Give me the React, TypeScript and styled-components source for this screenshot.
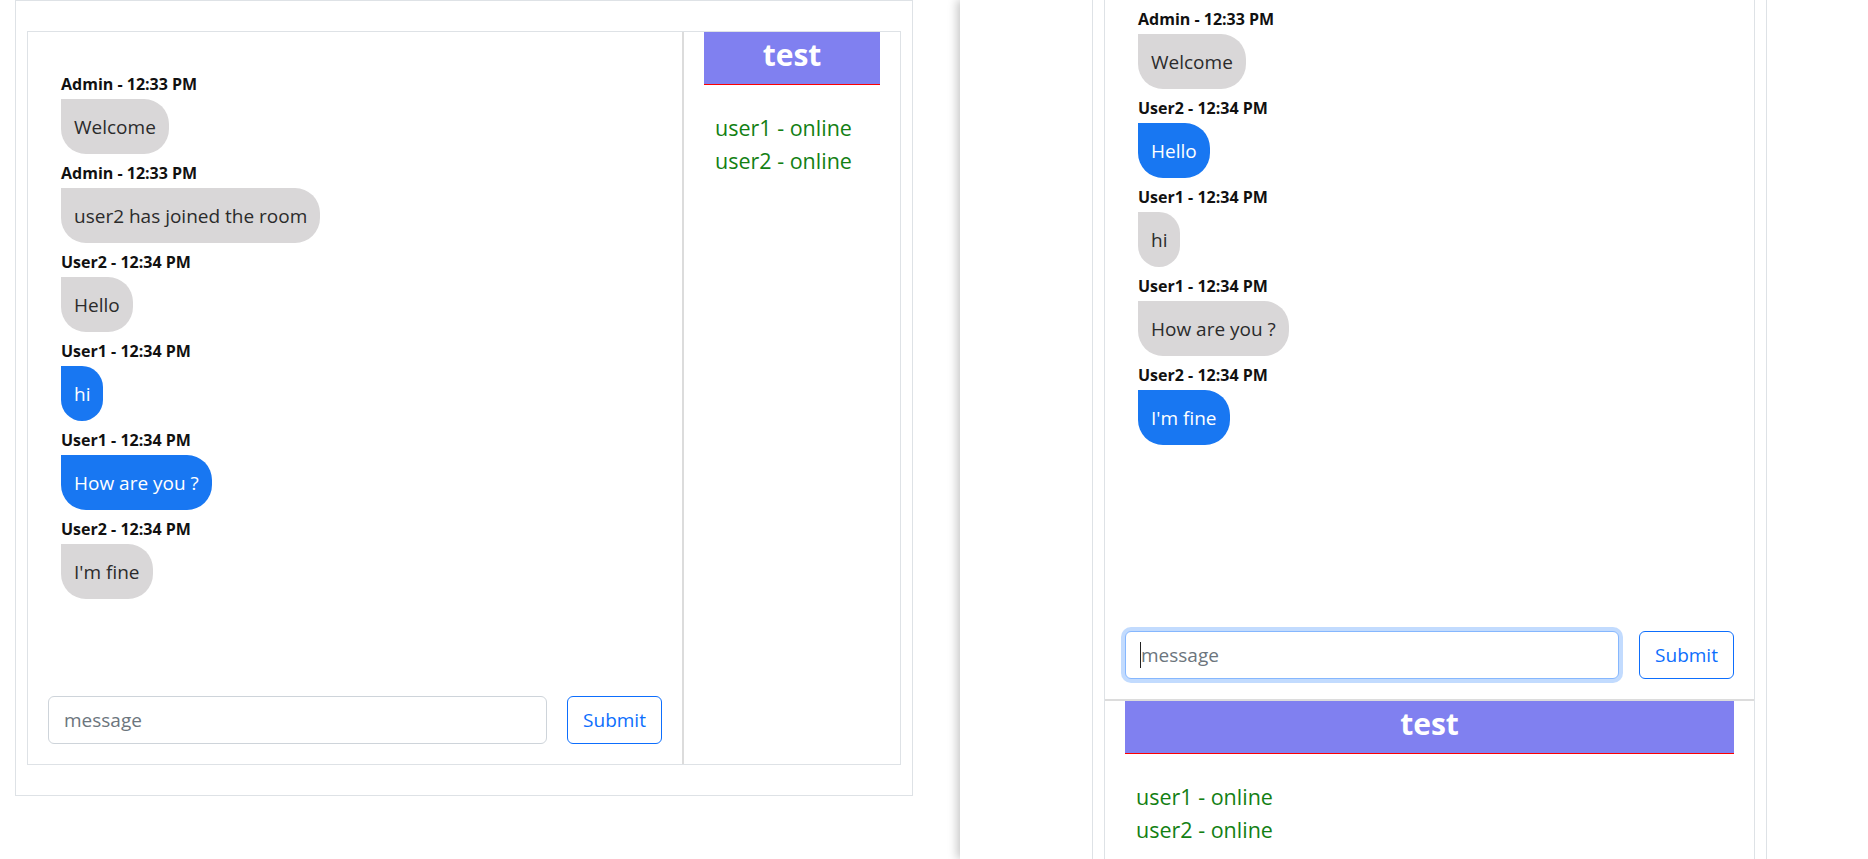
import React from "react";
import styled, { createGlobalStyle, css } from "styled-components";

type Message = { author: string; time: string; text: string; mine: boolean };

const user1Messages: Message[] = [
  { author: "Admin", time: "12:33 PM", text: "Welcome", mine: false },
  { author: "Admin", time: "12:33 PM", text: "user2 has joined the room", mine: false },
  { author: "User2", time: "12:34 PM", text: "Hello", mine: false },
  { author: "User1", time: "12:34 PM", text: "hi", mine: true },
  { author: "User1", time: "12:34 PM", text: "How are you ?", mine: true },
  { author: "User2", time: "12:34 PM", text: "I'm fine", mine: false },
];

const user2Messages: Message[] = [
  { author: "Admin", time: "12:33 PM", text: "Welcome", mine: false },
  { author: "User2", time: "12:34 PM", text: "Hello", mine: true },
  { author: "User1", time: "12:34 PM", text: "hi", mine: false },
  { author: "User1", time: "12:34 PM", text: "How are you ?", mine: false },
  { author: "User2", time: "12:34 PM", text: "I'm fine", mine: true },
];

const users = ["user1", "user2"];

const GlobalStyle = createGlobalStyle`
  html, body {
    margin: 0;
    padding: 0;
    background: #fff;
  }
  body {
    font-family: "Open Sans", "Noto Sans", sans-serif;
    color: #212529;
  }
  * {
    box-sizing: border-box;
  }
`;

const Screen = styled.div`
  display: flex;
  width: 1868px;
  height: 859px;
  overflow: hidden;
  background: #fff;
`;

const DesktopWindow = styled.div`
  flex: 0 0 960px;
  padding-left: 15px;
  background: #fff;
`;

const MobileWindow = styled.div`
  flex: 1;
  position: relative;
  z-index: 1;
  padding-left: 132px;
  background: #fff;
  overflow: hidden;
  box-shadow: -3px 0 9px rgba(0, 0, 0, 0.22);
`;

const Container = styled.div<{ $width: number; $shift: number }>`
  width: ${(p) => p.$width}px;
  margin-top: ${(p) => p.$shift}px;
  padding: 30px 11px;
  border: 1px solid #dee2e6;
`;

const Room = styled.div<{ $stacked: boolean }>`
  display: flex;
  flex-direction: ${(p) => (p.$stacked ? "column" : "row")};
  border: 1px solid #dee2e6;
`;

const ChatColumn = styled.div<{ $stacked: boolean }>`
  display: flex;
  flex-direction: column;
  ${(p) =>
    p.$stacked
      ? css`
          border-bottom: 2px solid #dcdcdc;
        `
      : css`
          flex: 0 0 656px;
          border-right: 2px solid #dcdcdc;
        `}
`;

const MessageList = styled.div`
  height: 664px;
  padding: 43px 20px 0 33px;
  overflow: hidden;
`;

const MessageItem = styled.div`
  display: flex;
  flex-direction: column;
  align-items: flex-start;
  margin-bottom: 10px;
`;

const Meta = styled.span`
  font-size: 16px;
  line-height: 18px;
  font-weight: 700;
  color: #111;
`;

const Bubble = styled.div<{ $mine: boolean }>`
  margin-top: 6px;
  padding: 12.5px 13px;
  font-size: 19px;
  line-height: 30px;
  border-radius: 0 25px 25px 25px;
  background: ${(p) => (p.$mine ? "#1877f2" : "#d9d7d8")};
  color: ${(p) => (p.$mine ? "#fff" : "#2b2b2b")};
`;

const Form = styled.form`
  display: flex;
  gap: 20px;
  padding: 0 20px 20px 20px;
`;

const InputWrap = styled.div`
  position: relative;
  flex: 1;
`;

const MessageInput = styled.input<{ $focused: boolean }>`
  display: block;
  width: 100%;
  height: 48px;
  padding: 0 15px;
  font-family: inherit;
  font-size: 19px;
  color: #212529;
  border: 1px solid ${(p) => (p.$focused ? "#86b7fe" : "#ced4da")};
  border-radius: 6px;
  outline: none;
  box-shadow: ${(p) => (p.$focused ? "0 0 0 4px rgba(13, 110, 253, 0.25)" : "none")};

  &::placeholder {
    color: #6c757d;
  }
`;

const Caret = styled.span`
  position: absolute;
  left: 15px;
  top: 11px;
  width: 1px;
  height: 26px;
  background: #222;
`;

const SubmitButton = styled.button`
  flex: 0 0 95px;
  height: 48px;
  padding: 0;
  font-family: inherit;
  font-size: 19px;
  color: #0d6efd;
  background: #fff;
  border: 1px solid #0d6efd;
  border-radius: 6px;
`;

const Sidebar = styled.div`
  flex: 1;
  display: flex;
  flex-direction: column;
`;

const RoomTitle = styled.h2`
  margin: 0 20px;
  height: 53px;
  padding-bottom: 7px;
  display: flex;
  align-items: center;
  justify-content: center;
  font-size: 30px;
  font-weight: 700;
  color: #fff;
  background: #8080f0;
  border-bottom: 1px solid red;
`;

const UserList = styled.ul`
  list-style: none;
  margin: 0 20px;
  padding: 26px 11px 20px;
`;

const UserItem = styled.li`
  font-size: 21.5px;
  line-height: 33px;
  color: #138013;
`;

const ChatRoom = ({
  messages,
  stacked,
  focused,
}: {
  messages: Message[];
  stacked: boolean;
  focused: boolean;
}) => (
  <Room $stacked={stacked}>
    <ChatColumn $stacked={stacked}>
      <MessageList>
        {messages.map((m, i) => (
          <MessageItem key={i}>
            <Meta>
              {m.author} - {m.time}
            </Meta>
            <Bubble $mine={m.mine}>{m.text}</Bubble>
          </MessageItem>
        ))}
      </MessageList>
      <Form onSubmit={(e) => e.preventDefault()}>
        <InputWrap>
          <MessageInput $focused={focused} placeholder='message' />
          {focused && <Caret />}
        </InputWrap>
        <SubmitButton type='submit'>Submit</SubmitButton>
      </Form>
    </ChatColumn>
    <Sidebar>
      <RoomTitle>test</RoomTitle>
      <UserList>
        {users.map((u) => (
          <UserItem key={u}>{u} - online</UserItem>
        ))}
      </UserList>
    </Sidebar>
  </Room>
);

const App = () => (
  <>
    <GlobalStyle />
    <Screen>
      <DesktopWindow>
        <Container $width={898} $shift={0}>
          <ChatRoom messages={user1Messages} stacked={false} focused={false} />
        </Container>
      </DesktopWindow>
      <MobileWindow>
        <Container $width={675} $shift={-65}>
          <ChatRoom messages={user2Messages} stacked={true} focused={true} />
        </Container>
      </MobileWindow>
    </Screen>
  </>
);

export default App;
